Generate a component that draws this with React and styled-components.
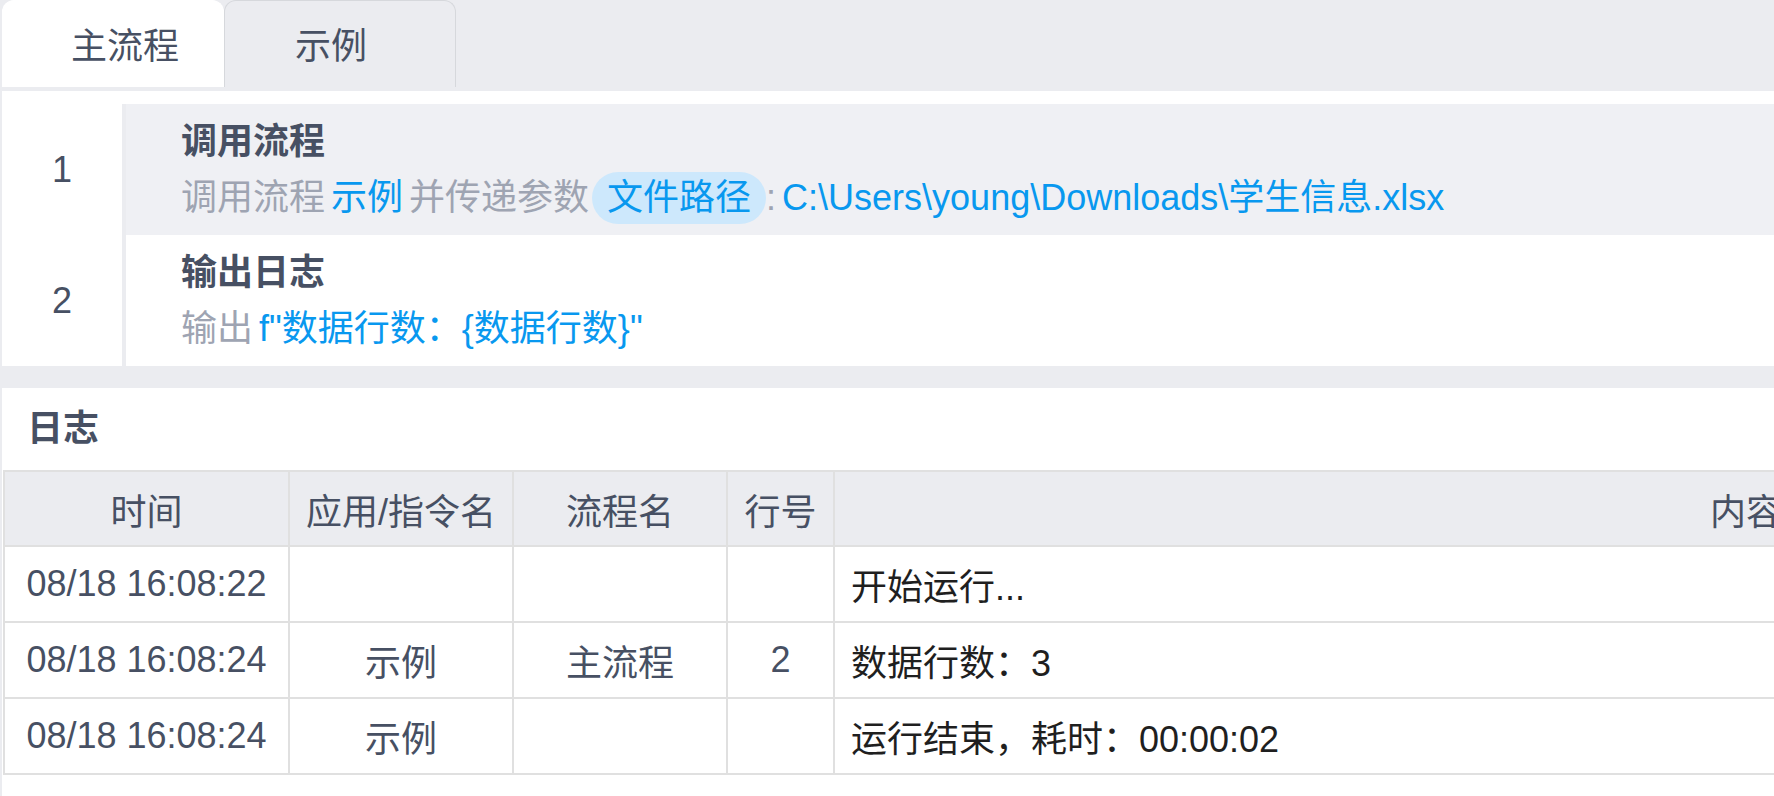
import React from "react";
import styled, { createGlobalStyle } from "styled-components";

const GlobalStyle = createGlobalStyle`
  body {
    margin: 0;
    background: #ebecf0;
    overflow: hidden;
    font-family: "Liberation Sans", "Noto Sans CJK SC", sans-serif;
  }
`;

const logs = [
  { time: "08/18 16:08:22", app: "", flow: "", line: "", text: "开始运行..." },
  { time: "08/18 16:08:24", app: "示例", flow: "主流程", line: "2", text: "数据行数：3" },
  { time: "08/18 16:08:24", app: "示例", flow: "", line: "", text: "运行结束，耗时：00:00:02" },
];

const App = () => {
  const steps = [
    {
      no: 1,
      title: "调用流程",
      active: true,
      desc: (
        <>
          调用流程 <Blue>示例</Blue> 并传递参数<Pill>文件路径</Pill>
          {": "}
          <Blue>C:\Users\young\Downloads\学生信息.xlsx</Blue>
        </>
      ),
    },
    {
      no: 2,
      title: "输出日志",
      desc: (
        <>
          输出 <Blue>f"数据行数：{"{"}数据行数{"}"}"</Blue>
        </>
      ),
    },
  ];

  return (
    <Page>
      <GlobalStyle />
      <TabBar>
        <Tab $active $padLeft={68} $padRight={44}>
          主流程
        </Tab>
        <Tab $padLeft={70} $padRight={88}>
          示例
        </Tab>
      </TabBar>

      <Steps>
        {steps.map((s) => (
          <StepRow key={s.no}>
            <LineNo>{s.no}</LineNo>
            <StepBody $active={s.active}>
              <StepTitle>{s.title}</StepTitle>
              <StepDesc>{s.desc}</StepDesc>
            </StepBody>
          </StepRow>
        ))}
      </Steps>

      <LogPanel>
        <LogTitle>日志</LogTitle>
        <LogTable>
          <colgroup>
            <col style={{ width: 285 }} />
            <col style={{ width: 224 }} />
            <col style={{ width: 214 }} />
            <col style={{ width: 107 }} />
            <col />
          </colgroup>
          <thead>
            <tr>
              <Th>时间</Th>
              <Th>应用/指令名</Th>
              <Th>流程名</Th>
              <Th>行号</Th>
              <Th>内容</Th>
            </tr>
          </thead>
          <tbody>
            {logs.map((l, i) => (
              <tr key={i}>
                <Td>{l.time}</Td>
                <Td>{l.app}</Td>
                <Td>{l.flow}</Td>
                <Td>{l.line}</Td>
                <Td $content>{l.text}</Td>
              </tr>
            ))}
          </tbody>
        </LogTable>
      </LogPanel>
    </Page>
  );
};

export default App;

const Page = styled.div`
  width: 2664px;
  height: 796px;
  padding-left: 2px;
  box-sizing: border-box;
  display: flex;
  flex-direction: column;
  color: #475063;
`;

const TabBar = styled.div`
  height: 91px;
  flex-shrink: 0;
  box-sizing: border-box;
  padding-bottom: 4px;
  display: flex;
  align-items: stretch;
`;

const Tab = styled.div`
  box-sizing: border-box;
  display: flex;
  align-items: center;
  padding: 0 ${(p) => p.$padRight}px 3px ${(p) => p.$padLeft}px;
  font-size: 36px;
  color: #475063;
  border-radius: 12px 12px 0 0;
  background: ${(p) => (p.$active ? "#ffffff" : "#ebecf0")};
  border: 1px solid ${(p) => (p.$active ? "#ffffff" : "#d6d8dc")};
  border-bottom: none;
`;

const Steps = styled.div`
  flex-shrink: 0;
  background: #ffffff;
  padding-top: 13px;
`;

const StepRow = styled.div`
  display: flex;
  height: 131px;
`;

const LineNo = styled.div`
  width: 120px;
  display: flex;
  align-items: center;
  justify-content: center;
  font-size: 36px;
  color: #475063;
`;

const StepBody = styled.div`
  flex: 1;
  border-left: 4px solid #ebecf0;
  background: ${(p) => (p.$active ? "#eff0f4" : "#ffffff")};
  padding: 10px 0 0 55px;
`;

const StepTitle = styled.div`
  font-size: 36px;
  line-height: 56px;
  font-weight: bold;
  color: #475063;
`;

const StepDesc = styled.div`
  font-size: 36px;
  line-height: 56px;
  color: #9ea4b2;
  white-space: nowrap;
  word-spacing: -4px;
`;

const Blue = styled.span`
  color: #0898ef;
`;

const Pill = styled.span`
  display: inline-block;
  margin-left: 3px;
  padding: 0 15px;
  line-height: 52px;
  border-radius: 26px;
  background: #cde8fc;
  color: #0898ef;
`;

const LogPanel = styled.div`
  margin-top: 22px;
  flex: 1;
  background: #ffffff;
`;

const LogTitle = styled.div`
  height: 82px;
  box-sizing: border-box;
  padding: 0 0 8px 25px;
  display: flex;
  align-items: center;
  font-size: 36px;
  font-weight: bold;
  color: #475063;
`;

const LogTable = styled.table`
  margin-left: 1px;
  width: 2656px;
  table-layout: fixed;
  border-collapse: collapse;
  font-size: 36px;
`;

const Th = styled.th`
  height: 73px;
  padding: 0;
  border: 2px solid #e0e0e0;
  background: #ebecf0;
  font-weight: normal;
  color: #475063;
  text-align: center;
`;

const Td = styled.td`
  height: 74px;
  padding: ${(p) => (p.$content ? "0 0 0 16px" : "0")};
  border: 2px solid #e0e0e0;
  text-align: ${(p) => (p.$content ? "left" : "center")};
  color: ${(p) => (p.$content ? "#1f1f1f" : "#475063")};
  white-space: nowrap;
`;
